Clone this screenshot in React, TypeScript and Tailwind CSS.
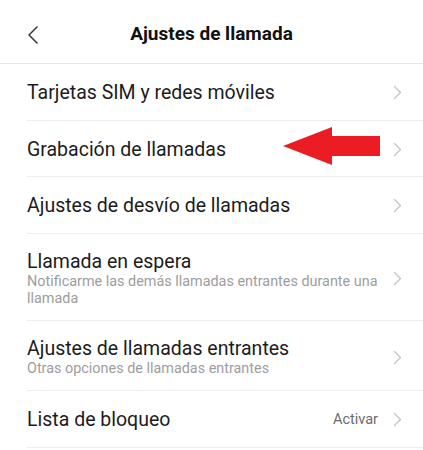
import type { ReactNode } from "react";

interface RowProps {
  title: string;
  subtitle?: ReactNode;
  value?: string;
  children?: ReactNode;
}

function Chevron() {
  return (
    <svg width="9" height="15" viewBox="0 0 9 15" fill="none" aria-hidden="true" className="flex-shrink-0">
      <path d="M1.5 1.5 L7.5 7.5 L1.5 13.5" stroke="#c4c4c4" strokeWidth="1.3" strokeLinecap="round" strokeLinejoin="round" />
    </svg>
  );
}

function SettingsRow({ title, subtitle, value, children }: RowProps) {
  const pad = subtitle ? "pt-[16px] pb-[12.5px]" : "pt-[17px] pb-[15px]";
  return (
    <li className="relative ml-[27px] border-b border-[#ececec]">
      <div className={`flex items-center pr-[21px] ${pad}`}>
        <div className="flex-1 min-w-0">
          <p className="text-[19.5px] leading-[23.5px] text-[#1c1c1c]">{title}</p>
          {subtitle && (
            <p className="mt-[1px] text-[14.4px] leading-[16.5px] text-[#9d9d9d] pr-[8px]">{subtitle}</p>
          )}
        </div>
        {value && <span className="text-[14.5px] text-[#6b6b6b] mr-[15px]">{value}</span>}
        <Chevron />
      </div>
      {children}
    </li>
  );
}

export default function App() {
  return (
    <div
      className="relative w-[423px] h-[450px] bg-white overflow-hidden"
      style={{ fontFamily: "Roboto, 'Noto Sans', sans-serif" }}
    >
      <header className="relative h-[64px] flex items-center justify-center border-b border-[#e6e6e6]">
        <button aria-label="Atrás" className="absolute left-[27px] top-[26px]">
          <svg width="13" height="18" viewBox="0 0 13 18" fill="none" aria-hidden="true">
            <path d="M10 1 L2 9 L10 17" stroke="#333" strokeWidth="1.5" strokeLinecap="round" strokeLinejoin="round" />
          </svg>
        </button>
        <h1 className="mt-[6px] text-[19px] font-bold text-[#111]">Ajustes de llamada</h1>
      </header>

      <ul>
        <SettingsRow title="Tarjetas SIM y redes móviles" />
        <SettingsRow title="Grabación de llamadas">
          {/* Red pointer arrow over the row */}
          <svg
            className="absolute left-[256px] top-[6px]"
            width="97"
            height="38"
            viewBox="0 0 97 38"
            aria-hidden="true"
          >
            <polygon points="0,19 49,0 49,9 97,9 97,29 49,29 49,38" fill="#ec1c24" />
          </svg>
        </SettingsRow>
        <SettingsRow title="Ajustes de desvío de llamadas" />
        <SettingsRow
          title="Llamada en espera"
          subtitle="Notificarme las demás llamadas entrantes durante una llamada"
        />
        <SettingsRow title="Ajustes de llamadas entrantes" subtitle="Otras opciones de llamadas entrantes" />
        <SettingsRow title="Lista de bloqueo" value="Activar" />
      </ul>
    </div>
  );
}
